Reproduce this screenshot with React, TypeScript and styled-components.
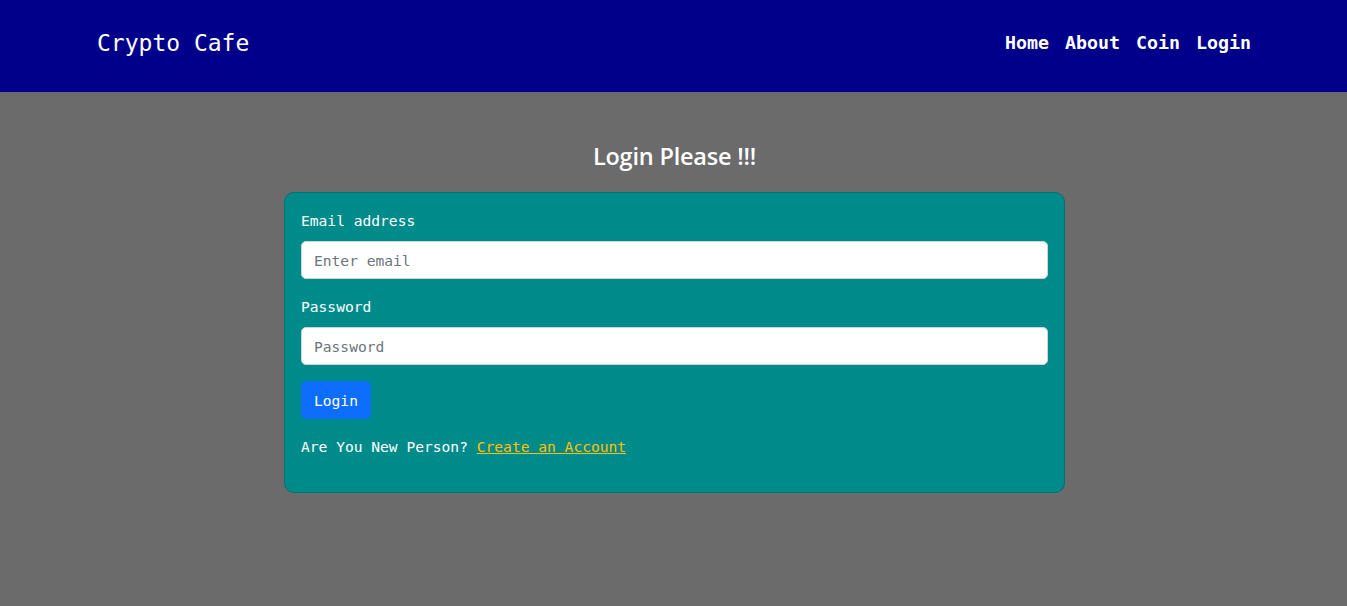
import React from "react";
import styled, { createGlobalStyle } from "styled-components";

const GlobalStyle = createGlobalStyle`
  html, body { margin: 0; padding: 0; }
  body {
    background: #6b6b6b;
    font-family: "DejaVu Sans Mono", "Liberation Mono", monospace;
    min-height: 606px;
  }
  * { box-sizing: border-box; }
`;

const Navbar = styled.nav`
  height: 92px;
  background: #00008b;
  display: flex;
  align-items: center;
  justify-content: space-between;
  padding: 0 88px 0 97px;
`;

const Brand = styled.a`
  color: #ffffff;
  font-family: "DejaVu Sans Mono", monospace;
  font-size: 23px;
  text-decoration: none;
  margin-top: -6px;
`;

const NavList = styled.div`
  display: flex;
  margin-top: -7px;
`;

const NavLink = styled.a`
  color: #ffffff;
  font-family: "DejaVu Sans Mono", monospace;
  font-weight: bold;
  font-size: 18.3px;
  padding: 0 8px;
  text-decoration: none;
`;

const Main = styled.main`
  display: flex;
  flex-direction: column;
  align-items: center;
  padding-top: 49px;
`;

const Title = styled.h3`
  margin: 0 0 21px 2px;
  color: #ffffff;
  font-family: "Open Sans", "Noto Sans", sans-serif;
  font-weight: 600;
  font-size: 23.5px;
  line-height: 30px;
  letter-spacing: -0.2px;
`;

const Card = styled.form`
  width: 781px;
  margin-left: 2px;
  background: #008b8b;
  border: 1px solid rgba(0, 0, 0, 0.18);
  border-radius: 10px;
  padding: 16px 16px 16px;
  color: #ffffff;
  font-size: 14.6px;
`;

const Field = styled.div`
  margin-bottom: 16px;
`;

const Label = styled.label`
  display: block;
  line-height: 24px;
  margin-bottom: 8px;
`;

const Input = styled.input`
  display: block;
  width: 100%;
  height: 38px;
  padding: 6px 12px;
  border: 1px solid #ced4da;
  border-radius: 5px;
  background: #ffffff;
  font-family: "DejaVu Sans Mono", monospace;
  font-size: 14.6px;
  color: #212529;
  &::placeholder { color: #6c757d; }
`;

const Button = styled.button`
  height: 38px;
  padding: 0 12px;
  background: #0d6efd;
  border: 1px solid #0d6efd;
  border-radius: 5px;
  color: #ffffff;
  font-family: "DejaVu Sans Mono", monospace;
  font-size: 14.6px;
`;

const Note = styled.p`
  margin: 16px 0 17px;
  line-height: 24px;
`;

const Link = styled.a`
  color: #ffc107;
  text-decoration: underline;
`;

export default function App() {
  return (
    <>
      <GlobalStyle />
      <Navbar>
        <Brand href="#">Crypto Cafe</Brand>
        <NavList>
          <NavLink href="#">Home</NavLink>
          <NavLink href="#">About</NavLink>
          <NavLink href="#">Coin</NavLink>
          <NavLink href="#">Login</NavLink>
        </NavList>
      </Navbar>
      <Main>
        <Title>Login Please !!!</Title>
        <Card onSubmit={(e) => e.preventDefault()}>
          <Field>
            <Label>Email address</Label>
            <Input type="email" placeholder="Enter email" />
          </Field>
          <Field>
            <Label>Password</Label>
            <Input type="password" placeholder="Password" />
          </Field>
          <Button type="submit">Login</Button>
          <Note>
            Are You New Person? <Link href="#">Create an Account</Link>
          </Note>
        </Card>
      </Main>
    </>
  );
}
